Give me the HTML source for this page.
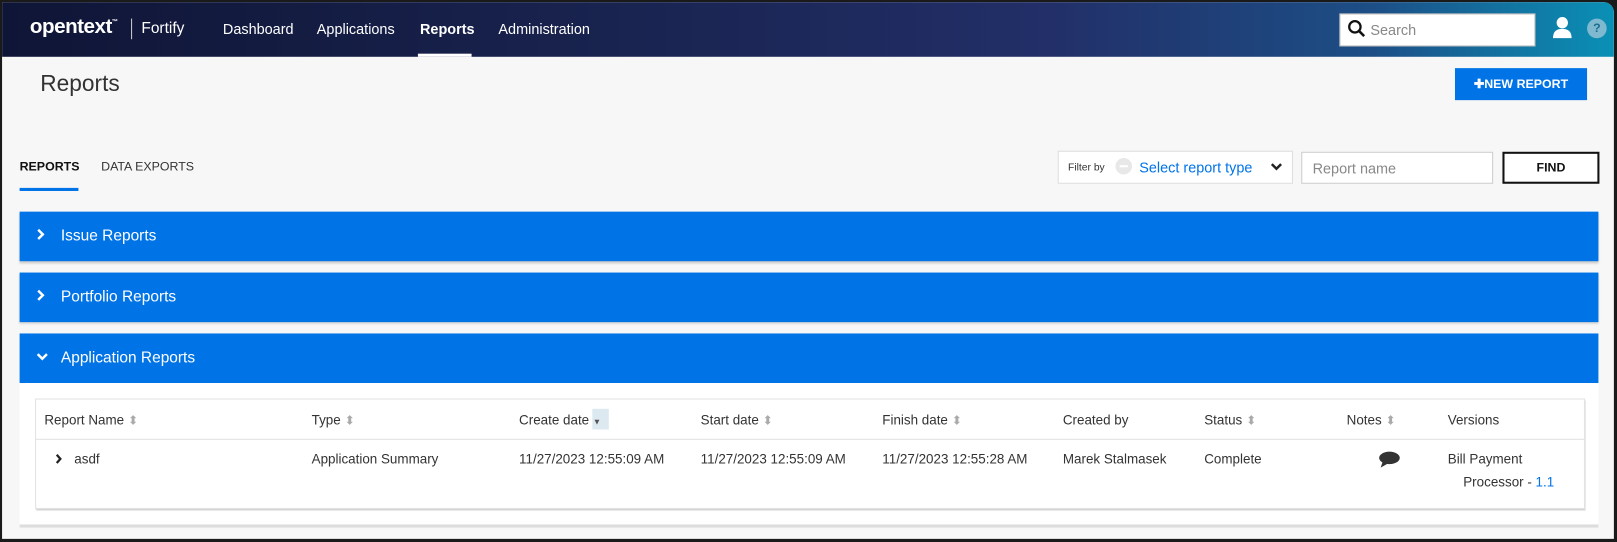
<!DOCTYPE html>
<html><head><meta charset="utf-8"><style>
*{box-sizing:border-box;margin:0;padding:0}
html,body{width:1617px;height:542px;overflow:hidden;background:#1a1a1a}
#w{position:absolute;left:0;top:0;width:1567px;height:525px;transform-origin:0 0;transform:scale(1.0319,1.0324);font-family:"Liberation Sans",sans-serif;color:#333}
#pg{position:absolute;left:2px;top:2px;width:1562px;height:520px;background:#f7f7f7;border-radius:0 10px 0 0;overflow:hidden}
.a{position:absolute;white-space:nowrap}
#nav{position:absolute;left:0;top:0;width:1562px;height:53px;background:linear-gradient(90deg,#0f1536 0%,#18224d 35%,#222f68 65%,#1d4e86 85%,#0a90b6 100%)}
.ni{color:#fff;font-size:14px;top:18px}
.bar{position:absolute;left:17px;width:1530px;height:48px;background:#0073e7;box-shadow:0 2px 2px #ccc;color:#fff;font-size:15px}
.bar span{position:absolute;left:40px;top:15px}
.bar svg{position:absolute;left:16px;top:16px}
.th{font-size:13px;top:397px;color:#333}
.td{font-size:13px;top:435px;color:#333}
.s{color:#aaa;font-size:12px}
</style></head><body><div id="w"><div id="pg">
<div id="nav">
<div class="a" style="left:27px;top:13px;color:#fff;font-size:20px;font-weight:bold;letter-spacing:-0.5px">opentext<sup style="font-size:6px;vertical-align:top;position:relative;top:4px">™</sup></div>
<div class="a" style="left:125px;top:16px;width:1px;height:20px;background:#ccc"></div>
<div class="a" style="left:135px;top:17px;color:#fff;font-size:15px">Fortify</div>
<div class="a ni" style="left:214px">Dashboard</div>
<div class="a ni" style="left:305px">Applications</div>
<div class="a ni" style="left:405px;font-weight:bold">Reports</div>
<div class="a" style="left:403px;top:50px;width:52px;height:3px;background:#fff"></div>
<div class="a ni" style="left:481px">Administration</div>
<div class="a" style="left:1296px;top:11px;width:190px;height:32px;background:#fff;border:1px solid #bbb"></div>
<svg class="a" style="left:1304px;top:17px" width="18" height="18" viewBox="0 0 18 18"><circle cx="7" cy="7" r="5.5" fill="none" stroke="#111" stroke-width="2.2"/><path d="M11 11l5 5" stroke="#111" stroke-width="2.5"/></svg>
<div class="a" style="left:1326px;top:19px;color:#888;font-size:14px">Search</div>
<svg class="a" style="left:1502px;top:13px" width="20" height="22" viewBox="0 0 20 22"><circle cx="10" cy="7" r="5.5" fill="#fff"/><path d="M1 22c0-7 4-9 9-9s9 2 9 9z" fill="#fff"/></svg>
<div class="a" style="left:1536px;top:16px;width:19px;height:19px;border-radius:50%;background:#7fb9cf;color:#1d6e8e;font-size:12px;font-weight:bold;text-align:center;line-height:19px">?</div>
</div>
<div class="a" style="left:37px;top:66px;font-size:22px;color:#333">Reports</div>
<div class="a" style="left:1408px;top:64px;width:128px;height:31px;background:#0073e7;color:#fff;font-size:12px;font-weight:bold;text-align:center;line-height:31px">✚NEW REPORT</div>
<div class="a" style="left:17px;top:152px;font-size:12px;font-weight:bold;color:#111">REPORTS</div>
<div class="a" style="left:17px;top:180px;width:57px;height:3px;background:#0073e7"></div>
<div class="a" style="left:96px;top:152px;font-size:12px;color:#333">DATA EXPORTS</div>
<div class="a" style="left:1023px;top:144px;width:228px;height:32px;background:#fff;border:1px solid #ddd"></div>
<div class="a" style="left:1033px;top:155px;font-size:10px;color:#333">Filter by</div>
<div class="a" style="left:1079px;top:151px;width:16px;height:16px;border-radius:50%;background:#e8e8e8"></div>
<div class="a" style="left:1083px;top:158px;width:8px;height:2px;background:#fff"></div>
<div class="a" style="left:1102px;top:152px;font-size:14px;color:#0073e7">Select report type</div>
<svg class="a" style="left:1229px;top:155px" width="12" height="9" viewBox="0 0 12 9"><path d="M1.5 2l4.5 4.5 4.5-4.5" fill="none" stroke="#222" stroke-width="2.4"/></svg>
<div class="a" style="left:1259px;top:145px;width:186px;height:31px;background:#fff;border:1px solid #ccc"></div>
<div class="a" style="left:1270px;top:153px;font-size:14px;color:#888">Report name</div>
<div class="a" style="left:1454px;top:145px;width:94px;height:31px;background:#fff;border:2px solid #111;font-size:12px;font-weight:bold;color:#111;text-align:center;line-height:27px">FIND</div>
<div class="bar" style="top:203px"><svg width="9" height="12" viewBox="0 0 9 12"><path d="M2 1.5l4.5 4.5L2 10.5" fill="none" stroke="#fff" stroke-width="2.4"/></svg><span>Issue Reports</span></div>
<div class="bar" style="top:262px"><svg width="9" height="12" viewBox="0 0 9 12"><path d="M2 1.5l4.5 4.5L2 10.5" fill="none" stroke="#fff" stroke-width="2.4"/></svg><span>Portfolio Reports</span></div>
<div class="bar" style="top:321px;box-shadow:none"><svg style="top:18px" width="12" height="9" viewBox="0 0 12 9"><path d="M1.5 2l4.5 4.5 4.5-4.5" fill="none" stroke="#fff" stroke-width="2.4"/></svg><span>Application Reports</span></div>
<div class="a" style="left:17px;top:369px;width:1530px;height:140px;background:#fff;border-bottom:3px solid #ddd"></div>
<div class="a" style="left:32px;top:384px;width:1502px;height:107px;background:#fff;border:1px solid #e2e2e2;box-shadow:1px 2px 1px #d4d4d4"></div>
<div class="a" style="left:33px;top:423px;width:1500px;height:1px;background:#e0e0e0"></div>
<div class="a th" style="left:41px">Report Name <span class="s">⬍</span></div>
<div class="a th" style="left:300px">Type <span class="s">⬍</span></div>
<div class="a" style="left:572px;top:394px;width:16px;height:20px;background:#dde9f1"></div>
<div class="a th" style="left:501px">Create date <span style="font-size:8px;color:#555">▼</span></div>
<div class="a th" style="left:677px">Start date <span class="s">⬍</span></div>
<div class="a th" style="left:853px">Finish date <span class="s">⬍</span></div>
<div class="a th" style="left:1028px">Created by</div>
<div class="a th" style="left:1165px">Status <span class="s">⬍</span></div>
<div class="a th" style="left:1303px">Notes <span class="s">⬍</span></div>
<div class="a th" style="left:1401px">Versions</div>
<svg class="a" style="left:51px;top:437px" width="8" height="11" viewBox="0 0 8 11"><path d="M2 1.5l3.5 4L2 9.5" fill="none" stroke="#222" stroke-width="2.2"/></svg>
<div class="a td" style="left:70px">asdf</div>
<div class="a td" style="left:300px">Application Summary</div>
<div class="a td" style="left:501px">11/27/2023 12:55:09 AM</div>
<div class="a td" style="left:677px">11/27/2023 12:55:09 AM</div>
<div class="a td" style="left:853px">11/27/2023 12:55:28 AM</div>
<div class="a td" style="left:1028px">Marek Stalmasek</div>
<div class="a td" style="left:1165px">Complete</div>
<svg class="a" style="left:1334px;top:435px" width="21" height="17" viewBox="0 0 21 17"><ellipse cx="10.5" cy="6.5" rx="10" ry="6" fill="#333"/><path d="M4 10l-2 6 7-4z" fill="#333"/></svg>
<div class="a td" style="left:1401px">Bill Payment</div>
<div class="a td" style="left:1416px;top:457px">Processor - <span style="color:#0073e7">1.1</span></div>
</div></div></body></html>
